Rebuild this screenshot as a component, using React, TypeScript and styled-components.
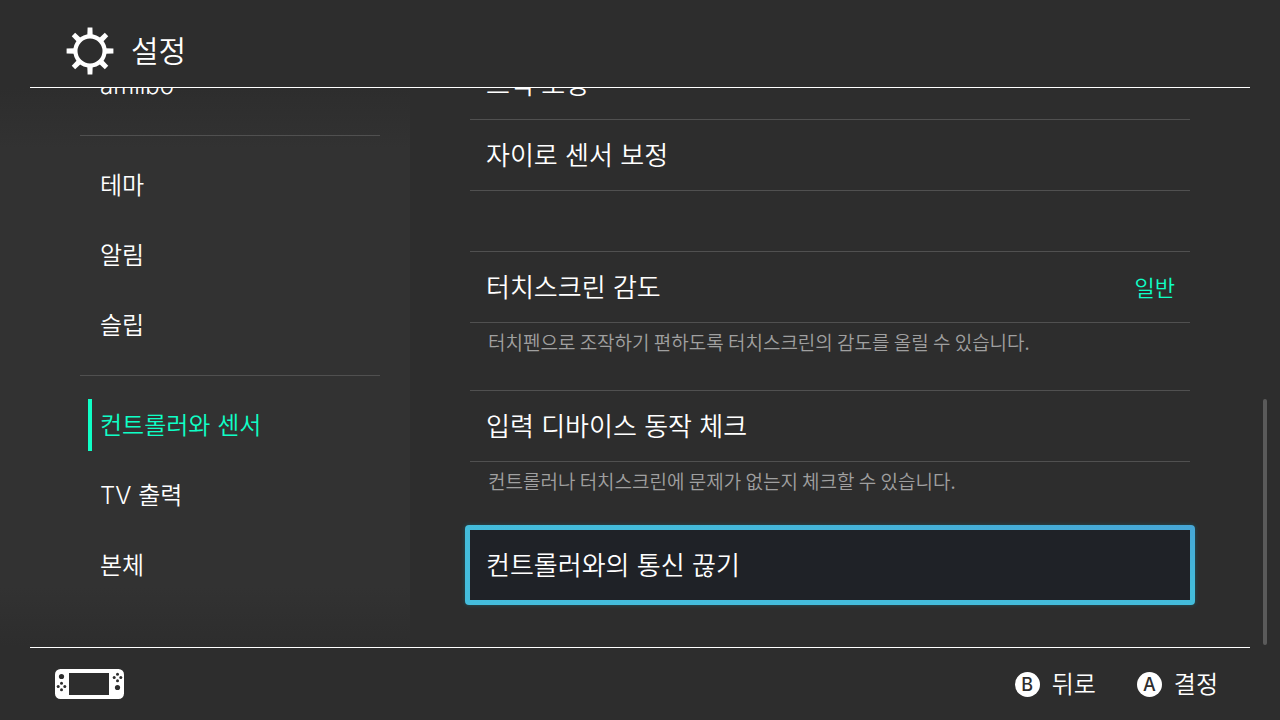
import React from "react";
import styled, { createGlobalStyle } from "styled-components";

const color = {
  page: "#2d2d2d",
  side: "#323232",
  text: "#ffffff",
  line: "#505050",
  muted: "#a0a0a0",
  accent: "#0fffc6",
};

const GlobalStyle = createGlobalStyle`
  *, *::before, *::after { box-sizing: border-box; }
  body {
    margin: 0;
    background: ${color.page};
    color: ${color.text};
    font-family: Inter, "Noto Sans CJK KR", sans-serif;
    font-weight: 350;
  }
  button {
    font: inherit;
    color: inherit;
    background: none;
    border: 0;
    padding: 0;
    text-align: left;
    cursor: pointer;
  }
`;

const Screen = styled.div`
  display: flex;
  flex-direction: column;
  height: 100vh;
`;

const Header = styled.header`
  flex: none;
  display: flex;
  align-items: center;
  gap: 17px;
  height: 88px;
  margin: 0 30px;
  padding: 14px 36px 0;
  border-bottom: 1px solid ${color.text};
`;

const Title = styled.h1`
  margin: 0;
  font-size: 30px;
  line-height: 40px;
  font-weight: 350;
`;

const Body = styled.div`
  flex: 1;
  min-height: 0;
  display: flex;
  overflow: hidden;
`;

const Sidebar = styled.nav`
  flex: none;
  width: 410px;
  display: flex;
  flex-direction: column;
  justify-content: flex-end;
  padding: 0 30px 47px 80px;
  background: linear-gradient(
    ${color.page},
    ${color.side} 60px,
    ${color.side} calc(100% - 60px),
    ${color.page}
  );
`;

const Menu = styled.ul`
  list-style: none;
  margin: 0;
  padding: 0;

  & + & {
    margin-top: 15px;
    padding-top: 14px;
    border-top: 1px solid ${color.line};
  }
`;

const MenuItem = styled.li`
  display: flex;
  align-items: center;
  height: 70px;
  padding-left: 8px;
`;

const MenuButton = styled.button<{ $active?: boolean }>`
  && {
    width: 100%;
    height: 52px;
    padding: 1px 0 0 8px;
    border-left: 4px solid ${(p) => (p.$active ? color.accent : "transparent")};
    color: ${(p) => (p.$active ? color.accent : color.text)};
    font-size: 24px;
    line-height: 32px;
  }
`;

const Content = styled.main`
  flex: 1;
  display: flex;
  flex-direction: column;
  justify-content: flex-end;
  padding: 0 73px 46px 60px;
`;

const Group = styled.section`
  display: flex;
  flex-direction: column;

  & + & {
    margin-top: 60px;
  }
`;

const Row = styled.button`
  && {
    flex: none;
    display: flex;
    align-items: center;
    justify-content: space-between;
    height: 72px;
    padding: 2px 15px 0 16px;
    border-top: 1px solid ${color.line};
    border-bottom: 1px solid ${color.line};
    font-size: 26px;
    line-height: 36px;
  }

  && + & {
    margin-top: -1px;
  }
`;

const FocusedRow = styled(Row)`
  &&& {
    height: 80px;
    margin: -4px -5px;
    border: 5px solid transparent;
    border-radius: 4px;
    background:
      linear-gradient(#1f2227, #1f2227) padding-box,
      linear-gradient(to top right, #44bddd, #43bcdb 60%, #46a6d6) border-box;
    box-shadow: 0 0 4px #1c5560;
  }
`;

const Value = styled.span`
  color: ${color.accent};
  font-size: 22px;
`;

const Note = styled.p`
  margin: 0;
  padding: 7px 18px 36px;
  color: ${color.muted};
  font-family: "Noto Sans CJK KR", sans-serif;
  font-size: 19px;
  line-height: 24px;
`;

const ScrollThumb = styled.div`
  flex: none;
  align-self: flex-end;
  width: 4px;
  height: 44%;
  margin: 0 13px 2px 0;
  border-radius: 2px;
  background: #5a5a5a;
`;

const Footer = styled.footer`
  flex: none;
  display: flex;
  align-items: center;
  justify-content: space-between;
  height: 73px;
  margin: 0 30px;
  padding: 0 32px 0 25px;
  border-top: 1px solid ${color.text};
`;

const Hints = styled.div`
  display: flex;
  gap: 41px;
`;

const Hint = styled.button`
  && {
    display: flex;
    align-items: center;
    gap: 12px;
    font-size: 24px;
    line-height: 32px;
  }
`;

const Badge = styled.span`
  width: 25px;
  height: 25px;
  border-radius: 50%;
  background: ${color.text};
  color: ${color.page};
  font-size: 18px;
  line-height: 25px;
  font-weight: 500;
  text-align: center;
`;

const HintLabel = styled.span`
  padding-top: 2px;
`;

const GearIcon = () => (
  <svg width="48" height="48" viewBox="-24 -24 48 48" aria-hidden="true">
    <circle r="14.6" fill="none" stroke="#fff" strokeWidth="4.2" />
    {[0, 45, 90, 135, 180, 225, 270, 315].map((angle) => (
      <path
        key={angle}
        d="M-2.4 -23.4H2.4L2.7 -15H-2.7Z"
        fill="#fff"
        transform={`rotate(${angle})`}
      />
    ))}
  </svg>
);

const Pad = ({ x, y }: { x: number; y: number }) => (
  <g fill={color.page}>
    <circle cx={x} cy={y - 3.3} r="1.5" />
    <circle cx={x} cy={y + 3.3} r="1.5" />
    <circle cx={x - 3.3} cy={y} r="1.5" />
    <circle cx={x + 3.3} cy={y} r="1.5" />
  </g>
);

const ConsoleIcon = () => (
  <svg width="70" height="30" viewBox="0 0 70 30" role="img" aria-label="Nintendo Switch">
    <rect width="69" height="30" rx="5.5" fill="#fff" />
    <rect x="14" y="4" width="40" height="22" fill={color.page} />
    <circle cx="6.5" cy="7.5" r="2.6" fill={color.page} />
    <Pad x={6.5} y={17.5} />
    <Pad x={62.5} y={8.5} />
    <circle cx="62.5" cy="18.5" r="2.6" fill={color.page} />
  </svg>
);

const menus = [["amiibo"], ["테마", "알림", "슬립"], ["컨트롤러와 센서", "TV 출력", "본체"]];
const current = "컨트롤러와 센서";

export default function App() {
  return (
    <Screen>
      <GlobalStyle />
      <Header>
        <GearIcon />
        <Title>설정</Title>
      </Header>
      <Body>
        <Sidebar>
          {menus.map((items) => (
            <Menu key={items[0]}>
              {items.map((label) => (
                <MenuItem key={label}>
                  <MenuButton
                    type="button"
                    $active={label === current}
                    aria-current={label === current ? "page" : undefined}
                  >
                    {label}
                  </MenuButton>
                </MenuItem>
              ))}
            </Menu>
          ))}
        </Sidebar>
        <Content>
          <Group>
            <Row type="button">스틱 보정</Row>
            <Row type="button">자이로 센서 보정</Row>
          </Group>
          <Group>
            <Row type="button">
              터치스크린 감도
              <Value>일반</Value>
            </Row>
            <Note>터치펜으로 조작하기 편하도록 터치스크린의 감도를 올릴 수 있습니다.</Note>
            <Row type="button">입력 디바이스 동작 체크</Row>
            <Note>컨트롤러나 터치스크린에 문제가 없는지 체크할 수 있습니다.</Note>
            <FocusedRow type="button">컨트롤러와의 통신 끊기</FocusedRow>
          </Group>
        </Content>
        <ScrollThumb />
      </Body>
      <Footer>
        <ConsoleIcon />
        <Hints>
          <Hint type="button">
            <Badge>B</Badge>
            <HintLabel>뒤로</HintLabel>
          </Hint>
          <Hint type="button">
            <Badge>A</Badge>
            <HintLabel>결정</HintLabel>
          </Hint>
        </Hints>
      </Footer>
    </Screen>
  );
}
